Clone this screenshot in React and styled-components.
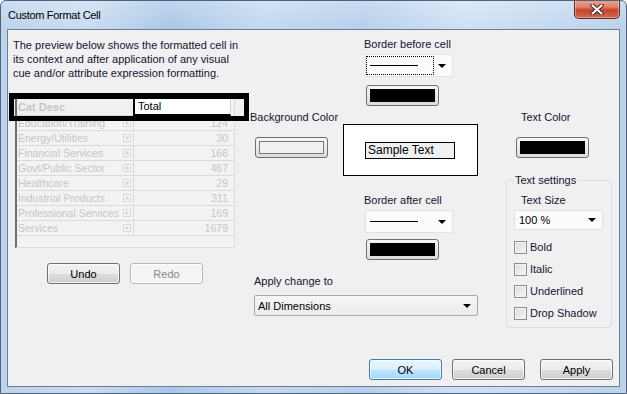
import React from "react";
import styled, { createGlobalStyle } from "styled-components";

const GlobalStyle = createGlobalStyle`
  html, body {
    margin: 0;
    padding: 0;
    background: #ffffff;
  }
  body {
    font-family: "Liberation Sans", Arial, sans-serif;
  }
`;

const Window = styled.div`
  width: 627px;
  height: 394px;
  box-sizing: border-box;
  display: flex;
  flex-direction: column;
  border: 1px solid #50627a;
  border-radius: 6px 6px 0 0;
  overflow: hidden;
  background: linear-gradient(
    to right,
    #bcd3ec 0%,
    #c8dcf1 14%,
    #aac7e8 27%,
    #c3d9f0 42%,
    #b7cfec 58%,
    #cfe1f4 74%,
    #bad2ec 100%
  );
`;

const TitleBar = styled.div`
  height: 28px;
  display: flex;
  align-items: center;
  justify-content: space-between;
  padding-left: 7px;
  background: linear-gradient(rgba(255, 255, 255, 0.25), rgba(255, 255, 255, 0));
`;

const Title = styled.span`
  font-size: 11px;
  letter-spacing: -0.3px;
  color: #000;
`;

const CloseButton = styled.div`
  align-self: flex-start;
  margin-top: -1px;
  margin-right: 6px;
  width: 46px;
  height: 19px;
  box-sizing: border-box;
  display: flex;
  align-items: center;
  justify-content: center;
  border: 1px solid #6b2a20;
  border-top: none;
  border-radius: 0 0 5px 5px;
  background: linear-gradient(#eaa894 0%, #dd7f68 40%, #c5442c 55%, #d06a52 100%);
  box-shadow: inset 0 0 0 1px rgba(255, 255, 255, 0.35);
`;

const Client = styled.div`
  margin: 0 6px 6px 6px;
  height: 358px;
  box-sizing: border-box;
  display: flex;
  flex-direction: column;
  border: 1px solid #6d7d92;
  background: #f0f0f0;
`;

const Main = styled.div`
  flex: 1;
  display: flex;
`;

const LeftCol = styled.div`
  width: 242px;
  box-sizing: border-box;
  padding: 8px 0 0 5px;
`;

const Label = styled.div`
  font-size: 11px;
  line-height: 14px;
  color: #141432;
  white-space: nowrap;
  margin-left: ${(p) => p.$indent || 0}px;
  margin-top: ${(p) => p.$top || 0}px;
`;

const Description = styled.p`
  margin: 0;
  font-size: 11px;
  line-height: 14px;
  color: #141432;
`;

const TableWrap = styled.div`
  position: relative;
  margin: 17px 0 0 2px;
  width: 220px;
`;

const HighlightFrame = styled.div`
  position: absolute;
  top: -4px;
  left: -6px;
  width: 240px;
  height: 28px;
  box-sizing: border-box;
  border: 5px solid #000;
  border-top-width: 6px;
  pointer-events: none;
`;

const TableBox = styled.div`
  height: 151px;
  box-sizing: border-box;
  border: 1px solid #dcdcdc;
  border-left: 2px solid #6e6e6e;
  background: #f3f3f3;
`;

const HeaderRow = styled.div`
  display: grid;
  grid-template-columns: 116px 98px;
  height: 18px;
`;

const HeaderCell = styled.div`
  box-sizing: border-box;
  display: flex;
  align-items: center;
  font-size: 11px;
  padding-left: ${(p) => (p.$active ? 3 : 1)}px;
  font-weight: ${(p) => (p.$active ? "normal" : "bold")};
  color: ${(p) => (p.$active ? "#000" : "#c6c6c6")};
  background: ${(p) => (p.$active ? "#ffffff" : "#f0f0f0")};
  border-left: ${(p) => (p.$active ? "2px solid #000" : "none")};
  border-bottom: ${(p) => (p.$active ? "2px solid #000" : "1px solid #d6d6d6")};
  border-right: ${(p) => (p.$active ? "1px solid #d0d0d0" : "none")};
`;

const Row = styled.div`
  display: grid;
  grid-template-columns: 117px 97px;
  height: 15px;
  box-sizing: border-box;
  border-bottom: 1px solid #dadada;
  font-size: 10.5px;
  color: #c6c6c6;
`;

const NameCell = styled.div`
  display: flex;
  align-items: center;
  justify-content: space-between;
  padding: 0 2px 0 1px;
  border-right: 1px solid #dadada;
  white-space: nowrap;
`;

const ValueCell = styled.div`
  display: flex;
  align-items: center;
  justify-content: flex-end;
  padding-right: 3px;
`;

const PlusBox = styled.span`
  width: 8px;
  height: 8px;
  box-sizing: border-box;
  border: 1px solid #d8d8d8;
  background: #f8f8f8;
  display: flex;
  align-items: center;
  justify-content: center;
  flex-shrink: 0;
`;

const ButtonRow = styled.div`
  display: flex;
  gap: 10px;
  margin: 15px 0 0 34px;
`;

const Button = styled.div`
  width: 73px;
  height: 21px;
  box-sizing: border-box;
  display: flex;
  align-items: center;
  justify-content: center;
  font-size: 11px;
  border-radius: 3px;
  margin-left: ${(p) => p.$extra || 0}px;
  color: ${(p) => (p.$disabled ? "#8a8a8a" : "#000")};
  border: 1px solid
    ${(p) => (p.$primary ? "#3c7fb1" : p.$disabled ? "#b5b9bc" : "#707070")};
  background: ${(p) =>
    p.$primary
      ? "linear-gradient(#eaf6fd 0%, #d9f0fc 50%, #bee6fd 51%, #a7d9f5 100%)"
      : p.$disabled
      ? "#f4f4f4"
      : "linear-gradient(#f2f2f2 0%, #ebebeb 50%, #dddddd 51%, #cfcfcf 100%)"};
  box-shadow: inset 0 0 0 1px rgba(255, 255, 255, 0.7);
`;

const MiddleCol = styled.div`
  width: 228px;
  padding-top: 7px;
  display: flex;
  flex-direction: column;
`;

const Stack = styled.div`
  margin-left: 114px;
  margin-top: ${(p) => p.$top || 0}px;
  display: flex;
  flex-direction: column;
`;

const Select = styled.div`
  width: ${(p) => p.$w}px;
  height: ${(p) => p.$h}px;
  box-sizing: border-box;
  display: flex;
  align-items: center;
  justify-content: space-between;
  margin-top: ${(p) => p.$top || 0}px;
  margin-left: ${(p) => p.$left || 0}px;
  padding: 0 6px 0 ${(p) => p.$pad || 0}px;
  font-size: 11px;
  color: #000;
  border: 1px solid ${(p) => (p.$boxed ? "#a9a9a9" : "#e2e2e2")};
  border-radius: ${(p) => (p.$boxed ? "2px" : "0")};
  background: ${(p) => (p.$boxed ? "linear-gradient(#f6f6f6, #ebebeb)" : "#fbfbfb")};
`;

const Arrow = styled.span`
  width: 0;
  height: 0;
  border-left: 4px solid transparent;
  border-right: 4px solid transparent;
  border-top: 4px solid #000;
`;

const LineOption = styled.div`
  width: 68px;
  height: 19px;
  box-sizing: border-box;
  display: flex;
  align-items: center;
  padding-left: 3px;
  border: 1px dotted ${(p) => (p.$focused ? "#000" : "transparent")};
`;

const LineSample = styled.span`
  width: 48px;
  height: 1px;
  background: #000;
`;

const Swatch = styled.div`
  width: 73px;
  height: 21px;
  box-sizing: border-box;
  padding: 3px;
  margin-top: ${(p) => p.$top || 0}px;
  margin-left: ${(p) => p.$left || 0}px;
  border: 1px solid #707070;
  border-radius: 3px;
  background: linear-gradient(#f7f7f7, #dcdcdc);
`;

const SwatchFill = styled.div`
  height: 100%;
  box-sizing: border-box;
  background: ${(p) => p.$color};
  border: 1px solid ${(p) => (p.$color === "#000" ? "#000" : "#7a7a7a")};
`;

const MidRow = styled.div`
  display: flex;
  align-items: flex-start;
  margin-top: 4px;
`;

const BgCol = styled.div`
  width: 93px;
  display: flex;
  flex-direction: column;
`;

const SampleBox = styled.div`
  width: 135px;
  height: 52px;
  box-sizing: border-box;
  margin-top: 14px;
  padding-left: 21px;
  display: flex;
  align-items: center;
  border: 1px solid #000;
  background: #ffffff;
`;

const SampleText = styled.div`
  width: 90px;
  height: 17px;
  box-sizing: border-box;
  padding-left: 2px;
  display: flex;
  align-items: center;
  font-size: 12px;
  color: #000;
  border: 1px solid #000;
  background: #f0f0f0;
`;

const RightCol = styled.div`
  width: 106px;
  margin-left: 28px;
  padding-top: 80px;
  display: flex;
  flex-direction: column;
`;

const GroupBox = styled.fieldset`
  margin: 15px 0 0 0;
  height: 155px;
  box-sizing: border-box;
  padding: 0 0 0 7px;
  border: 1px solid #d5dfe5;
  border-radius: 3px;
`;

const Legend = styled.legend`
  padding: 0 1px;
  font-size: 11px;
  line-height: 14px;
  color: #141432;
`;

const CheckList = styled.div`
  display: flex;
  flex-direction: column;
  gap: 8px;
  margin-top: 10px;
`;

const CheckRow = styled.div`
  display: flex;
  align-items: center;
  gap: 3px;
  height: 14px;
  font-size: 11px;
  color: #141432;
`;

const CheckBox = styled.span`
  width: 13px;
  height: 13px;
  box-sizing: border-box;
  border: 1px solid #8e8f8f;
  background: linear-gradient(135deg, #dcdcdc, #f6f6f6);
  box-shadow: inset 0 0 0 1px #f4f4f4;
`;

const ButtonBar = styled.div`
  display: flex;
  justify-content: flex-end;
  gap: 10px;
  padding: 0 6px 6px 0;
`;

const rows = [
  ["Education/Training", "124"],
  ["Energy/Utilities", "30"],
  ["Financial Services", "166"],
  ["Govt/Public Sector", "467"],
  ["Healthcare", "29"],
  ["Industrial Products", "311"],
  ["Professional Services", "169"],
  ["Services", "1679"],
];

const Plus = () => (
  <PlusBox>
    <svg width="6" height="6" viewBox="0 0 6 6">
      <path d="M3 1v4M1 3h4" stroke="#cdcdcd" strokeWidth="1" />
    </svg>
  </PlusBox>
);

const CloseGlyph = () => (
  <svg width="14" height="11" viewBox="0 0 14 11">
    <path d="M2.5 1.5l9 8M11.5 1.5l-9 8" stroke="#4a2018" strokeWidth="4.2" strokeLinecap="round" />
    <path d="M2.5 1.5l9 8M11.5 1.5l-9 8" stroke="#ffffff" strokeWidth="2.2" strokeLinecap="round" />
  </svg>
);

const App = () => {
  return (
    <>
      <GlobalStyle />
      <Window>
        <TitleBar>
          <Title>Custom Format Cell</Title>
          <CloseButton>
            <CloseGlyph />
          </CloseButton>
        </TitleBar>
        <Client>
          <Main>
            <LeftCol>
              <Description>
                The preview below shows the formatted cell in
                <br />
                its context and after application of any visual
                <br />
                cue and/or attribute expression formatting.
              </Description>
              <TableWrap>
                <TableBox>
                  <HeaderRow>
                    <HeaderCell>Cat Desc</HeaderCell>
                    <HeaderCell $active>Total</HeaderCell>
                  </HeaderRow>
                  {rows.map(([name, value]) => (
                    <Row key={name}>
                      <NameCell>
                        {name}
                        <Plus />
                      </NameCell>
                      <ValueCell>{value}</ValueCell>
                    </Row>
                  ))}
                </TableBox>
                <HighlightFrame />
              </TableWrap>
              <ButtonRow>
                <Button>Undo</Button>
                <Button $disabled>Redo</Button>
              </ButtonRow>
            </LeftCol>

            <MiddleCol>
              <Stack>
                <Label>Border before cell</Label>
                <Select $w={88} $h={23} $top={3} $left={1}>
                  <LineOption $focused>
                    <LineSample />
                  </LineOption>
                  <Arrow />
                </Select>
                <Swatch $top={8} $left={2}>
                  <SwatchFill $color="#000" />
                </Swatch>
              </Stack>

              <MidRow>
                <BgCol>
                  <Label>Background Color</Label>
                  <Swatch $top={13} $left={5}>
                    <SwatchFill $color="#f0f0f0" />
                  </Swatch>
                </BgCol>
                <SampleBox>
                  <SampleText>Sample Text</SampleText>
                </SampleBox>
              </MidRow>

              <Stack $top={17}>
                <Label>Border after cell</Label>
                <Select $w={88} $h={23} $top={3} $left={1}>
                  <LineOption>
                    <LineSample />
                  </LineOption>
                  <Arrow />
                </Select>
                <Swatch $top={6} $left={2}>
                  <SwatchFill $color="#000" />
                </Swatch>
              </Stack>

              <Label $top={14} $indent={4}>
                Apply change to
              </Label>
              <Select $w={224} $h={21} $top={7} $left={4} $pad={3} $boxed>
                All Dimensions
                <Arrow />
              </Select>
            </MiddleCol>

            <RightCol>
              <Label $indent={15}>Text Color</Label>
              <Swatch $top={13} $left={10}>
                <SwatchFill $color="#000" />
              </Swatch>
              <GroupBox>
                <Legend>Text settings</Legend>
                <Label $top={6} $indent={7}>
                  Text Size
                </Label>
                <Select $w={89} $h={20} $top={3} $pad={4}>
                  100 %
                  <Arrow />
                </Select>
                <CheckList>
                  {["Bold", "Italic", "Underlined", "Drop Shadow"].map((t) => (
                    <CheckRow key={t}>
                      <CheckBox />
                      {t}
                    </CheckRow>
                  ))}
                </CheckList>
              </GroupBox>
            </RightCol>
          </Main>

          <ButtonBar>
            <Button $primary>OK</Button>
            <Button>Cancel</Button>
            <Button $extra={5}>Apply</Button>
          </ButtonBar>
        </Client>
      </Window>
    </>
  );
};

export default App;
